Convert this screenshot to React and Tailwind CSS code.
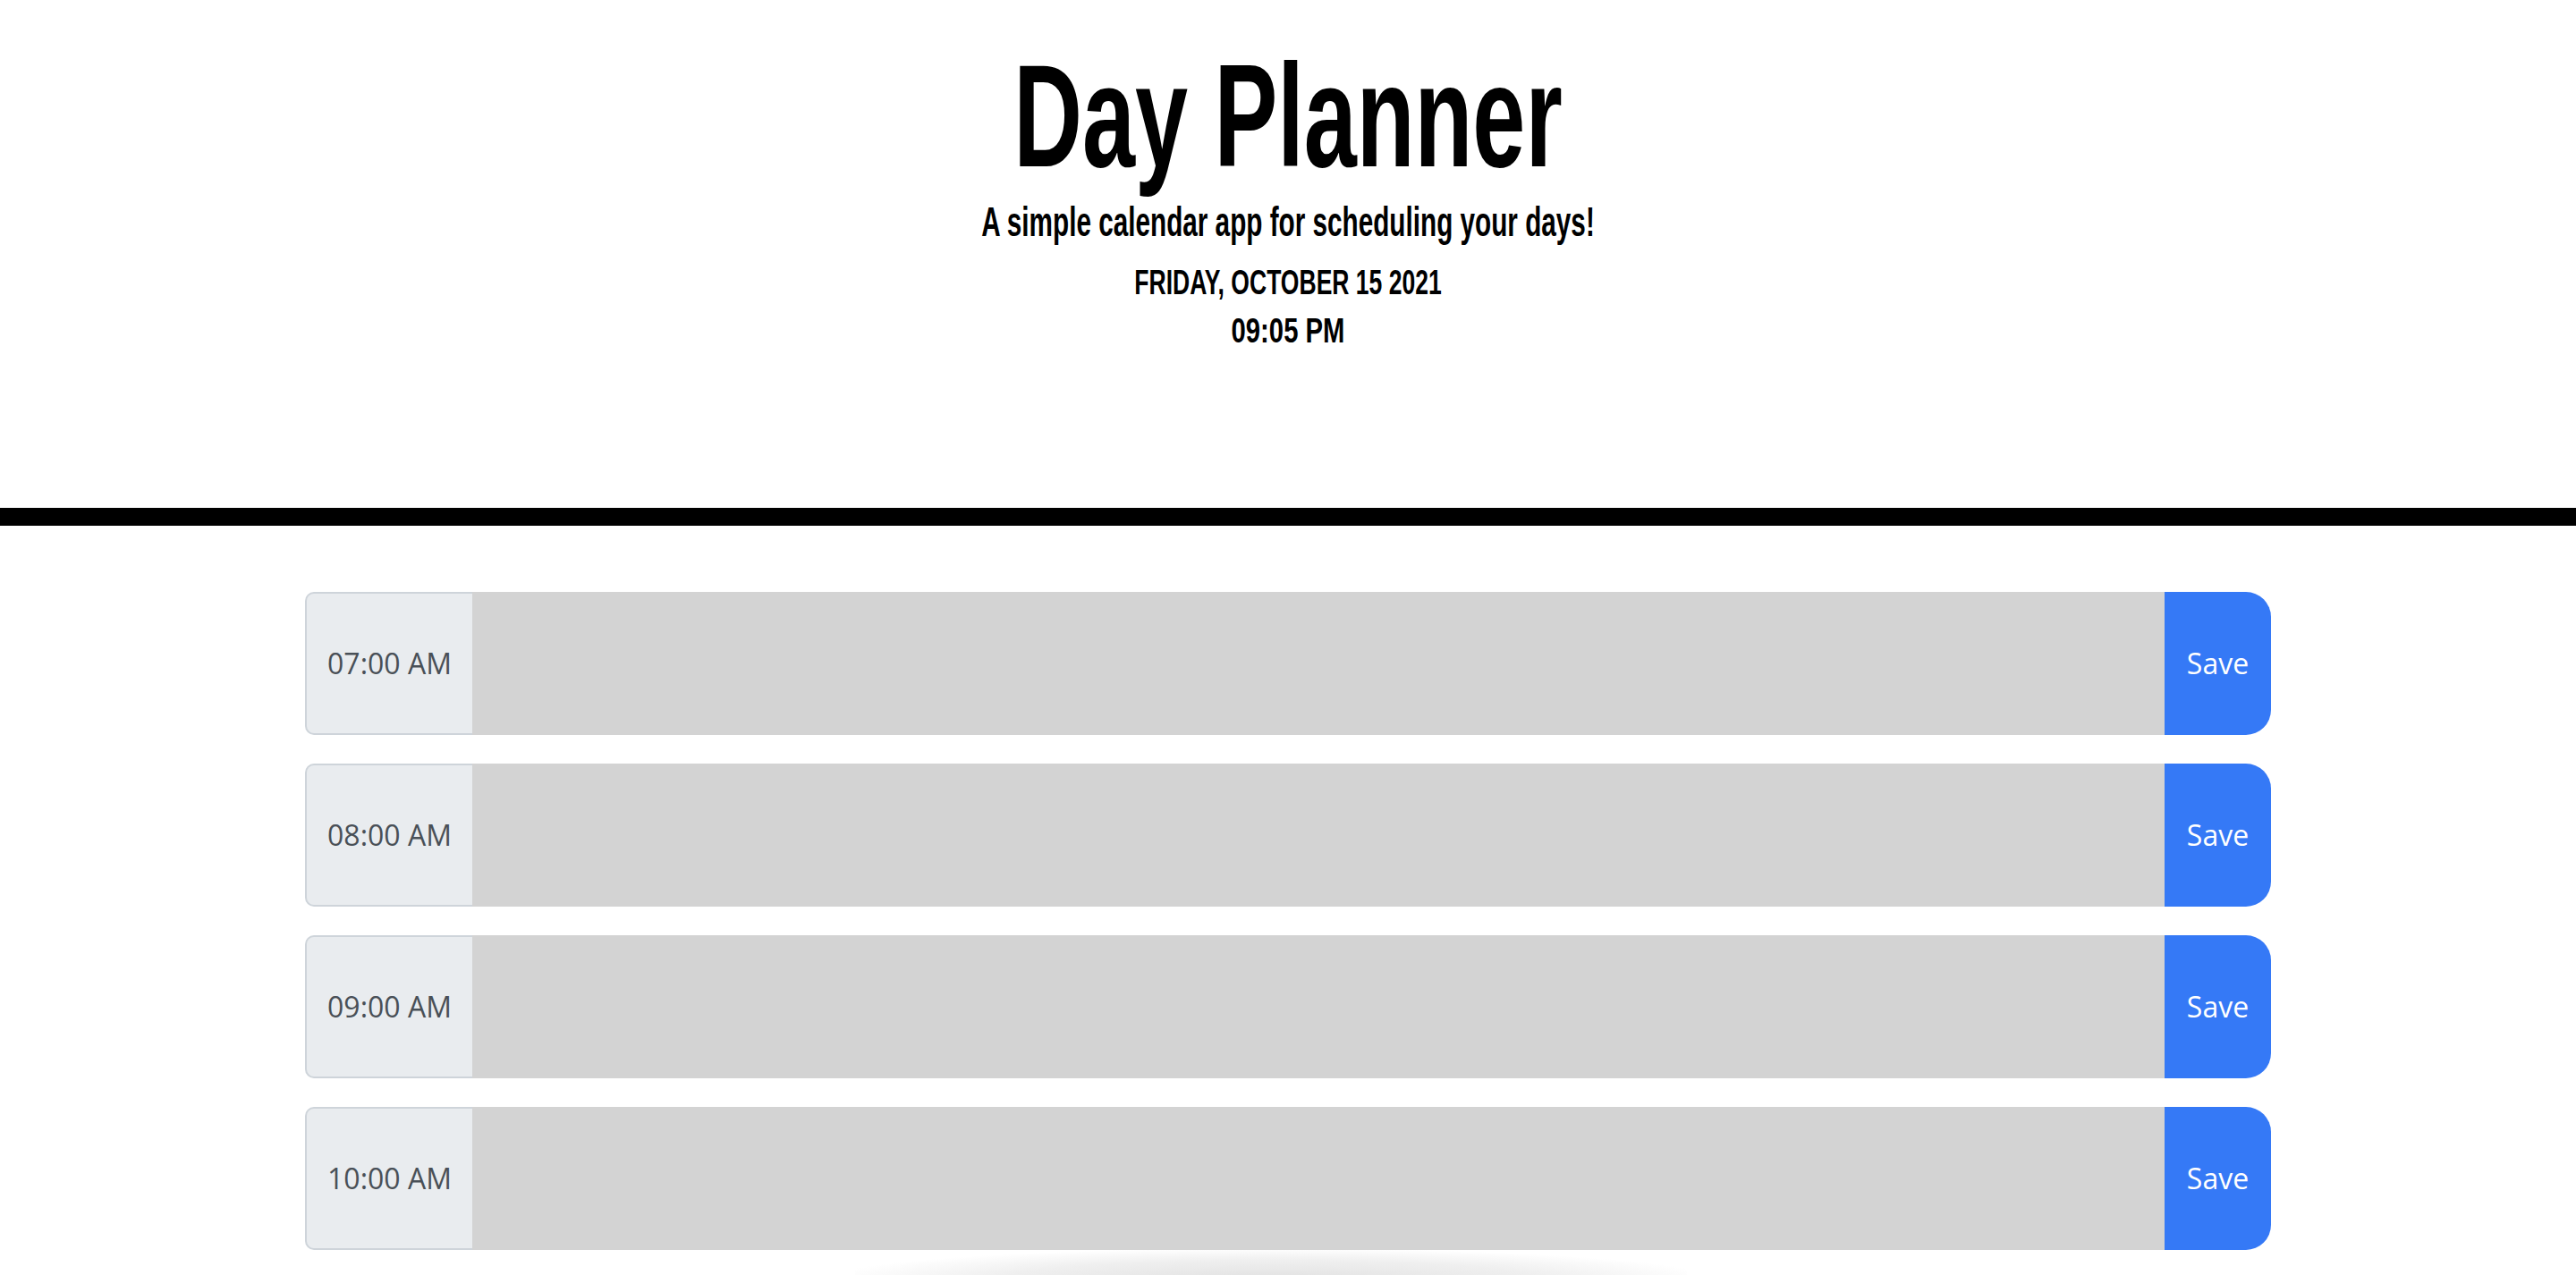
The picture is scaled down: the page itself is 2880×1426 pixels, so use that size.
import React from 'react';

const hours = ['07:00 AM', '08:00 AM', '09:00 AM', '10:00 AM', '11:00 AM', '12:00 PM', '01:00 PM', '02:00 PM', '03:00 PM', '04:00 PM', '05:00 PM'];

const display = "font-['Liberation_Sans',Arial,sans-serif]";

function HourRow({ label, shadow }) {
  return (
    <div className="relative flex h-[160px] w-[2198px] mx-auto">
      {shadow && (
        <div className="absolute left-[615px] -top-8 h-8 w-[930px] bg-[radial-gradient(ellipse_at_bottom,#e2e2e2_0%,#efefef_45%,rgba(255,255,255,0)_75%)]" />
      )}
      <div className="flex w-[187px] items-center justify-center rounded-l-[10px] border-2 border-r-0 border-[#ced4da] bg-[#e9ecef] font-['Open_Sans',sans-serif] text-[32px] text-[#495057]">
        {label}
      </div>
      <textarea className="flex-1 resize-none border-0 bg-[#d3d3d3] outline-none" />
      <button className="w-[119px] rounded-r-[28px] bg-[#3579f6] font-['Open_Sans',sans-serif] text-[32px] text-white">
        Save
      </button>
    </div>
  );
}

export default function App() {
  return (
    <div className="min-h-screen bg-white">
      {/* Header */}
      <header className={`border-b-[20px] border-black pt-[48px] pb-[179px] text-center text-black ${display}`}>
        <h1 className="scale-x-[0.651] text-[163px] font-bold leading-none">Day Planner</h1>
        <p className="mt-[13px] scale-x-[0.632] text-[47px] font-bold leading-none">A simple calendar app for scheduling your days!</p>
        <p className="mt-[25px] scale-x-[0.68] text-[39px] font-bold uppercase leading-none">Friday, October 15 2021</p>
        <p className="mt-[15px] scale-x-[0.75] text-[39px] font-bold uppercase leading-none">09:05 PM</p>
      </header>

      {/* Hour rows */}
      <main className="flex flex-col gap-8 pt-[74px] pb-16">
        {hours.map((h, i) => (
          <HourRow key={h} label={h} shadow={i === 4} />
        ))}
      </main>
    </div>
  );
}
